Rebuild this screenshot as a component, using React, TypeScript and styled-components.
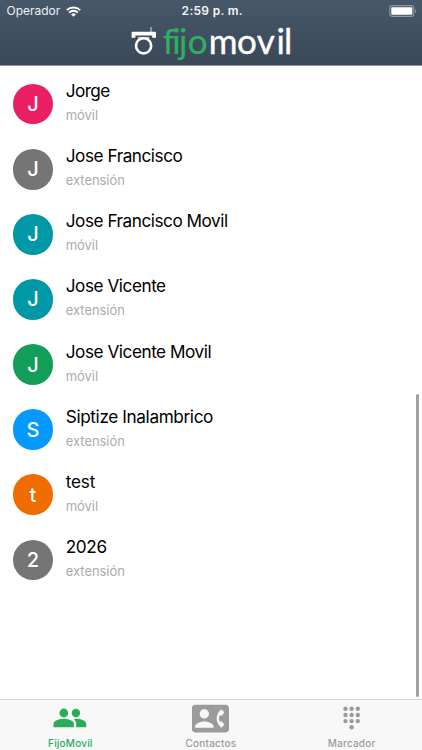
import React from "react";
import styled, { createGlobalStyle } from "styled-components";
import { MdContactPhone } from "react-icons/md";

const GlobalStyle = createGlobalStyle`
  * { box-sizing: border-box; }
  body { margin: 0; background: #fff; font-family: Inter, "Liberation Sans", sans-serif; }
`;

const Screen = styled.div`
  position: relative;
  display: flex;
  flex-direction: column;
  width: 422px;
  height: 750px;
  overflow: hidden;
  background: #fff;
`;

const Header = styled.header`
  flex: none;
  height: 66px;
  background: linear-gradient(#475869, #3a4858);
  border-bottom: 1px solid #8d959e;
`;

const StatusBar = styled.div`
  display: grid;
  grid-template-columns: 1fr auto 1fr;
  align-items: center;
  height: 22px;
  padding: 0 5px 0 6.5px;
  color: #fff;
`;

const Carrier = styled.div`
  display: flex;
  align-items: center;
  gap: 5.5px;
  font-size: 12px;
  line-height: 22px;
  letter-spacing: 0;
  color: #eef1f4;
`;

const Clock = styled.div`
  padding-left: 1px;
  font-size: 12px;
  font-weight: 600;
  line-height: 22px;
  letter-spacing: 0.3px;
  color: #f4f6f8;
`;

const Battery = styled.svg`
  justify-self: end;
`;

const Brand = styled.svg`
  display: block;
  margin: -6px auto 0;
  overflow: visible;
  font-family: Lato, sans-serif;
  font-size: 35px;
`;

const ContactList = styled.main`
  flex: 1;
  padding-top: 5.4px;
`;

const ContactRow = styled.div`
  display: flex;
  align-items: center;
  gap: 12.4px;
  height: 65.15px;
  padding-left: 12.6px;
`;

const Avatar = styled.div<{ $color: string }>`
  display: flex;
  flex: none;
  align-items: center;
  justify-content: center;
  width: 40.8px;
  height: 40.8px;
  border-radius: 50%;
  background: ${(p) => p.$color};
  color: #fff;
  font-size: 20px;
  font-weight: 500;
`;

const Details = styled.div`
  display: flex;
  flex-direction: column;
  gap: 5px;
  padding-bottom: 4px;
`;

const Name = styled.div<{ $spacing: number }>`
  font-size: 17.2px;
  line-height: 22px;
  letter-spacing: ${(p) => p.$spacing}px;
  color: #000;
`;

const Kind = styled.div`
  font-size: 13px;
  line-height: 17px;
  letter-spacing: -0.05px;
  color: #acacac;
`;

const ScrollThumb = styled.div`
  position: absolute;
  right: 3px;
  top: 394px;
  width: 3px;
  height: 303px;
  border-radius: 2px;
  background: #a2a2a2;
`;

const TabBar = styled.nav`
  display: grid;
  grid-template-columns: repeat(3, 1fr);
  flex: none;
  height: 51px;
  border-top: 1px solid #d8d8d8;
  background: #f8f8f8;
`;

const Tab = styled.div<{ $active?: boolean }>`
  display: flex;
  flex-direction: column;
  align-items: center;
  color: ${(p) => (p.$active ? "#2aac5c" : "#9b9b9b")};
`;

const TabIcon = styled.div`
  display: flex;
  align-items: center;
  justify-content: center;
  height: 35.5px;
  padding-top: 1px;
`;

const TabLabel = styled.div`
  font-size: 10px;
  font-weight: 500;
  line-height: 14px;
  letter-spacing: 0.2px;
`;

const contacts = [
  { name: "Jorge", kind: "móvil", color: "#e91e63", spacing: -0.6 },
  { name: "Jose Francisco", kind: "extensión", color: "#757575", spacing: -0.47 },
  { name: "Jose Francisco Movil", kind: "móvil", color: "#0097a7", spacing: -0.48 },
  { name: "Jose Vicente", kind: "extensión", color: "#0097a7", spacing: -0.47 },
  { name: "Jose Vicente Movil", kind: "móvil", color: "#129d58", spacing: -0.47 },
  { name: "Siptize Inalambrico", kind: "extensión", color: "#0399ff", spacing: -0.38 },
  { name: "test", kind: "móvil", color: "#ef6c00", spacing: -0.2 },
  { name: "2026", kind: "extensión", color: "#757575", spacing: -0.4 },
];

const WifiIcon = () => (
  <svg width="15" height="11" viewBox="0 0 15 11" fill="none" stroke="#fff" strokeWidth="1.9">
    <path d="M.8 4.2a9.5 9.5 0 0 1 13.4 0" />
    <path d="M3.1 6.6a6.2 6.2 0 0 1 8.8 0" />
    <path d="M7.5 10.8 5.1 8.4a3.4 3.4 0 0 1 4.8 0Z" fill="#fff" stroke="none" />
  </svg>
);

const BatteryIcon = () => (
  <Battery width="28" height="12" viewBox="0 0 28 12">
    <rect x=".8" y=".6" width="24" height="10.8" rx="2.6" fill="none" stroke="#8e98a3" strokeWidth="1.1" />
    <rect x="2.3" y="2.2" width="21" height="7.6" rx="1" fill="#fff" />
    <path d="M26 4.2c1.6.5 1.6 3.1 0 3.6Z" fill="#8e98a3" />
  </Battery>
);

const Logo = () => (
  <Brand width="164" height="50" viewBox="129 16 164 50">
    <path
      d="M132.6 31.8H150.6V27H151.4V31.8H155Q156 31.8 156 32.8V37.8H152.2V35.4H135.4V37.8H131.6V32.8Q131.6 31.8 132.6 31.8Z"
      fill="#fff"
    />
    <circle cx="143.6" cy="45.8" r="7.6" fill="none" stroke="#fff" strokeWidth="2.6" />
    <path d="M138 37.9H149.2" stroke="#fff" strokeWidth="1.3" />
    <text x="162.8 172.2 179 187.7" y="54" fill="#2eaf62" stroke="#2eaf62" strokeWidth=".2">fijo</text>
    <text x="208.8 237 256.8 276.4 284" y="54" fill="#fff" stroke="#fff" strokeWidth=".35">movil</text>
  </Brand>
);

const PeopleIcon = () => (
  <svg width="34" height="20" viewBox="0 0 34 20" fill="currentColor">
    <circle cx="10.8" cy="5" r="4.4" />
    <circle cx="22.9" cy="5" r="4.2" />
    <path d="M.5 19.2V16C.5 12.2 7 10.7 10.7 10.7S20.9 12.2 20.9 16V19.2Z" />
    <path d="M23.2 19.2V16C23.2 13.9 22.3 12.3 20.8 11C25 10.1 33.3 12 33.3 16V19.2Z" />
  </svg>
);

const DialpadIcon = () => (
  <svg width="18" height="24" viewBox="0 0 18 24" fill="currentColor">
    {[2.8, 9, 15.1].flatMap((y) => [2.5, 8.6, 14.8].map((x) => <circle key={`${x}-${y}`} cx={x} cy={y} r="2.2" />))}
    <circle cx="8.6" cy="21.3" r="2.2" />
  </svg>
);

export default function App() {
  return (
    <Screen>
      <GlobalStyle />
      <Header>
        <StatusBar>
          <Carrier>
            Operador
            <WifiIcon />
          </Carrier>
          <Clock>2:59 p. m.</Clock>
          <BatteryIcon />
        </StatusBar>
        <Logo />
      </Header>
      <ContactList>
        {contacts.map((c) => (
          <ContactRow key={c.name}>
            <Avatar $color={c.color}>{c.name[0]}</Avatar>
            <Details>
              <Name $spacing={c.spacing}>{c.name}</Name>
              <Kind>{c.kind}</Kind>
            </Details>
          </ContactRow>
        ))}
      </ContactList>
      <ScrollThumb />
      <TabBar>
        <Tab $active>
          <TabIcon><PeopleIcon /></TabIcon>
          <TabLabel>FijoMovil</TabLabel>
        </Tab>
        <Tab>
          <TabIcon><MdContactPhone size={37} /></TabIcon>
          <TabLabel>Contactos</TabLabel>
        </Tab>
        <Tab>
          <TabIcon><DialpadIcon /></TabIcon>
          <TabLabel>Marcador</TabLabel>
        </Tab>
      </TabBar>
    </Screen>
  );
}
